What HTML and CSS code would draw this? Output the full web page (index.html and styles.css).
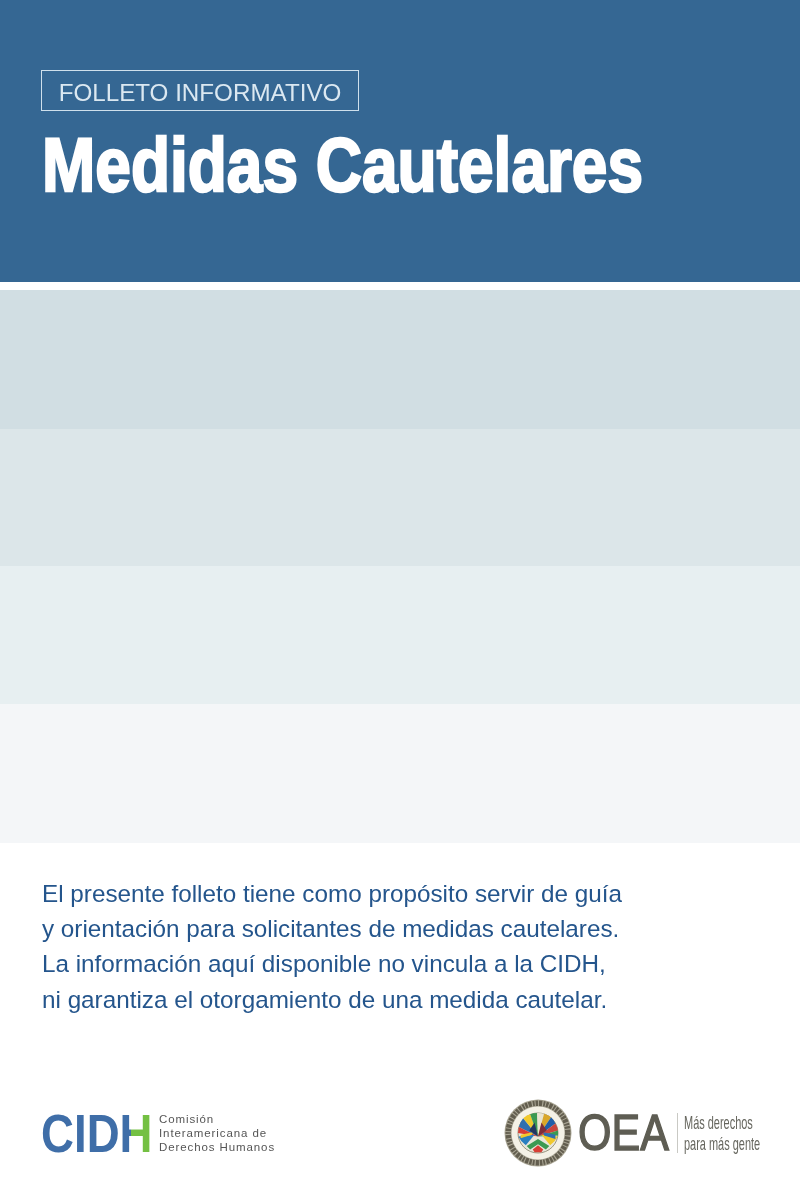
FILE: index.html
```html
<!DOCTYPE html>
<html lang="es">
<head>
<meta charset="utf-8">
<title>Medidas Cautelares</title>
<link rel="stylesheet" href="styles.css">
</head>
<body>
<main class="page">
  <header class="hero">
    <div class="tag">FOLLETO INFORMATIVO</div>
    <h1 class="title">Medidas Cautelares</h1>
  </header>
  <div class="bands">
    <div class="band band-1"></div>
    <div class="band band-2"></div>
    <div class="band band-3"></div>
    <div class="band band-4"></div>
  </div>
  <p class="intro">El presente folleto tiene como propósito servir de guía<br>y orientación para solicitantes de medidas cautelares.<br>La información aquí disponible no vincula a la CIDH,<br>ni garantiza el otorgamiento de una medida cautelar.</p>
  <footer class="logos">
    <div class="cidh">
      <div class="cidh-mark">CID<span class="cidh-h">H</span></div>
      <div class="cidh-name">Comisión<br>Interamericana de<br>Derechos Humanos</div>
    </div>
    <div class="oea">
      <svg class="seal" viewBox="0 0 68 68" aria-hidden="true">
        <circle cx="34" cy="34" r="33.5" fill="#a9a594"/>
        <circle cx="34" cy="34" r="29.8" fill="none" stroke="#625d4e" stroke-width="5.4" stroke-dasharray="2.4 1 3.2 1.2 1.8 1"/>
        <circle cx="34" cy="34" r="26.5" fill="#f4f1e6"/>
        <g transform="translate(34 34) scale(.87) translate(-34 -34)">
          <circle cx="34" cy="34" r="23" fill="#e8e6da" stroke="#8d8872" stroke-width="1"/>
          <path d="M34 38 L12 27 A23 23 0 0 1 17 17 Z" fill="#2f6fb0"/>
          <path d="M34 38 L17 17 A23 23 0 0 1 25 12.5 Z" fill="#f1c92c"/>
          <path d="M34 38 L25 12.5 A23 23 0 0 1 33 11 Z" fill="#3c9a52"/>
          <path d="M34 38 L33 11 A23 23 0 0 1 41 12 Z" fill="#e9e4d0"/>
          <path d="M34 38 L41 12 A23 23 0 0 1 49 16 Z" fill="#d9a72a"/>
          <path d="M34 38 L49 16 A23 23 0 0 1 54 23 Z" fill="#1f5ea8"/>
          <path d="M34 38 L54 23 A23 23 0 0 1 57 31 Z" fill="#c9453c"/>
          <path d="M34 38 L12 27 L11 34 Z" fill="#d83f35"/>
          <path d="M34 38 L57 31 L57 37 Z" fill="#3c9a52"/>
          <path d="M11.5 38 L30 36 L20 48 A23 23 0 0 1 11.5 38 Z" fill="#2a7fc0"/>
          <path d="M14 36 L28 33 L27 36 L14 40 Z" fill="#f1c92c"/>
          <path d="M56.5 38 L38 36 L48 48 A23 23 0 0 0 56.5 38 Z" fill="#f1c92c"/>
          <path d="M54 36 L40 33 L41 37 L54 41 Z" fill="#2f6fb0"/>
          <path d="M20 48 L48 48 A23 23 0 0 1 20 48 Z" fill="#e8e6da"/>
          <path d="M21 49 L34 41 L47 49 L43 53 L34 47 L25 53 Z" fill="#3c9a52"/>
          <path d="M28 53 L34 48 L40 53 L38 56 L30 56 Z" fill="#d83f35"/>
          <path d="M24 31 L34 38 L30 22 Z" fill="#23365f"/>
          <path d="M44 31 L34 38 L38 22 Z" fill="#7f2d3a"/>
        </g>
      </svg>
      <div class="oea-mark">OEA</div>
      <div class="oea-rule"></div>
      <div class="oea-slogan">Más derechos<br>para más gente</div>
    </div>
  </footer>
</main>
</body>
</html>
```
FILE: styles.css
```css
* { box-sizing: border-box; }
html, body { margin: 0; padding: 0; background: #fff; }
.page { width: 800px; height: 1200px; overflow: hidden; font-family: "Liberation Sans", Arial, sans-serif; }

.hero { height: 282px; background: #356793; padding: 70px 41px 0; }
.tag {
  width: 318px; height: 41px; border: 1px solid #cfe0ec;
  color: #dbe8f1; font-size: 24.2px; line-height: 43px; text-align: center;
  filter: blur(.3px);
}
.title {
  margin: 17px 0 0 1px; color: #fff;
  font-size: 76px; line-height: 74px; font-weight: 700;
  -webkit-text-stroke: 2.4px #fff; white-space: nowrap;
  transform: scaleX(.842); transform-origin: left center;
  filter: blur(.3px);
}

.bands { margin-top: 8px; }
.band-1 { height: 139px; background: #d1dee3; }
.band-2 { height: 137px; background: #dce6e9; }
.band-3 { height: 138px; background: #e7eff1; }
.band-4 { height: 139px; background: #f4f6f8; }

.intro {
  margin: 33px 0 0; padding-left: 42px;
  color: #24558c; font-size: 24.28px; line-height: 35.2px; white-space: nowrap;
  filter: blur(.3px);
}

.logos { display: flex; justify-content: space-between; align-items: center; margin-top: 82px; padding: 0 40px 0 41px; filter: blur(.6px); }
.cidh { display: flex; align-items: center; gap: 9px; }
.cidh-mark {
  width: 109px; font-size: 54px; font-weight: 700; line-height: 54px; color: #3f6ea8;
  white-space: nowrap; transform: scaleX(.845); transform-origin: left center;
}
.cidh-h {
  background: linear-gradient(90deg, #3f6ea8 0 34%, #74c043 34% 100%);
  -webkit-background-clip: text; background-clip: text; color: transparent;
}
.cidh-name { color: #555; font-size: 11.5px; line-height: 14px; letter-spacing: .9px; white-space: nowrap; }

.oea { display: flex; align-items: center; }
.seal { width: 68px; height: 68px; display: block; flex: none; }
.oea-mark {
  width: 92px; margin-left: 6px; color: #5e5d53;
  font-size: 50px; line-height: 50px; -webkit-text-stroke: 1.4px #5e5d53;
  white-space: nowrap; transform: scaleX(.86); transform-origin: left center;
}
.oea-rule { width: 1px; height: 40px; margin: 0 6px 0 7px; background: #c9c9c4; }
.oea-slogan {
  width: 76px; color: #66665e; font-size: 19px; line-height: 21px; white-space: nowrap;
  transform: scaleX(.577); transform-origin: left center;
}
```
